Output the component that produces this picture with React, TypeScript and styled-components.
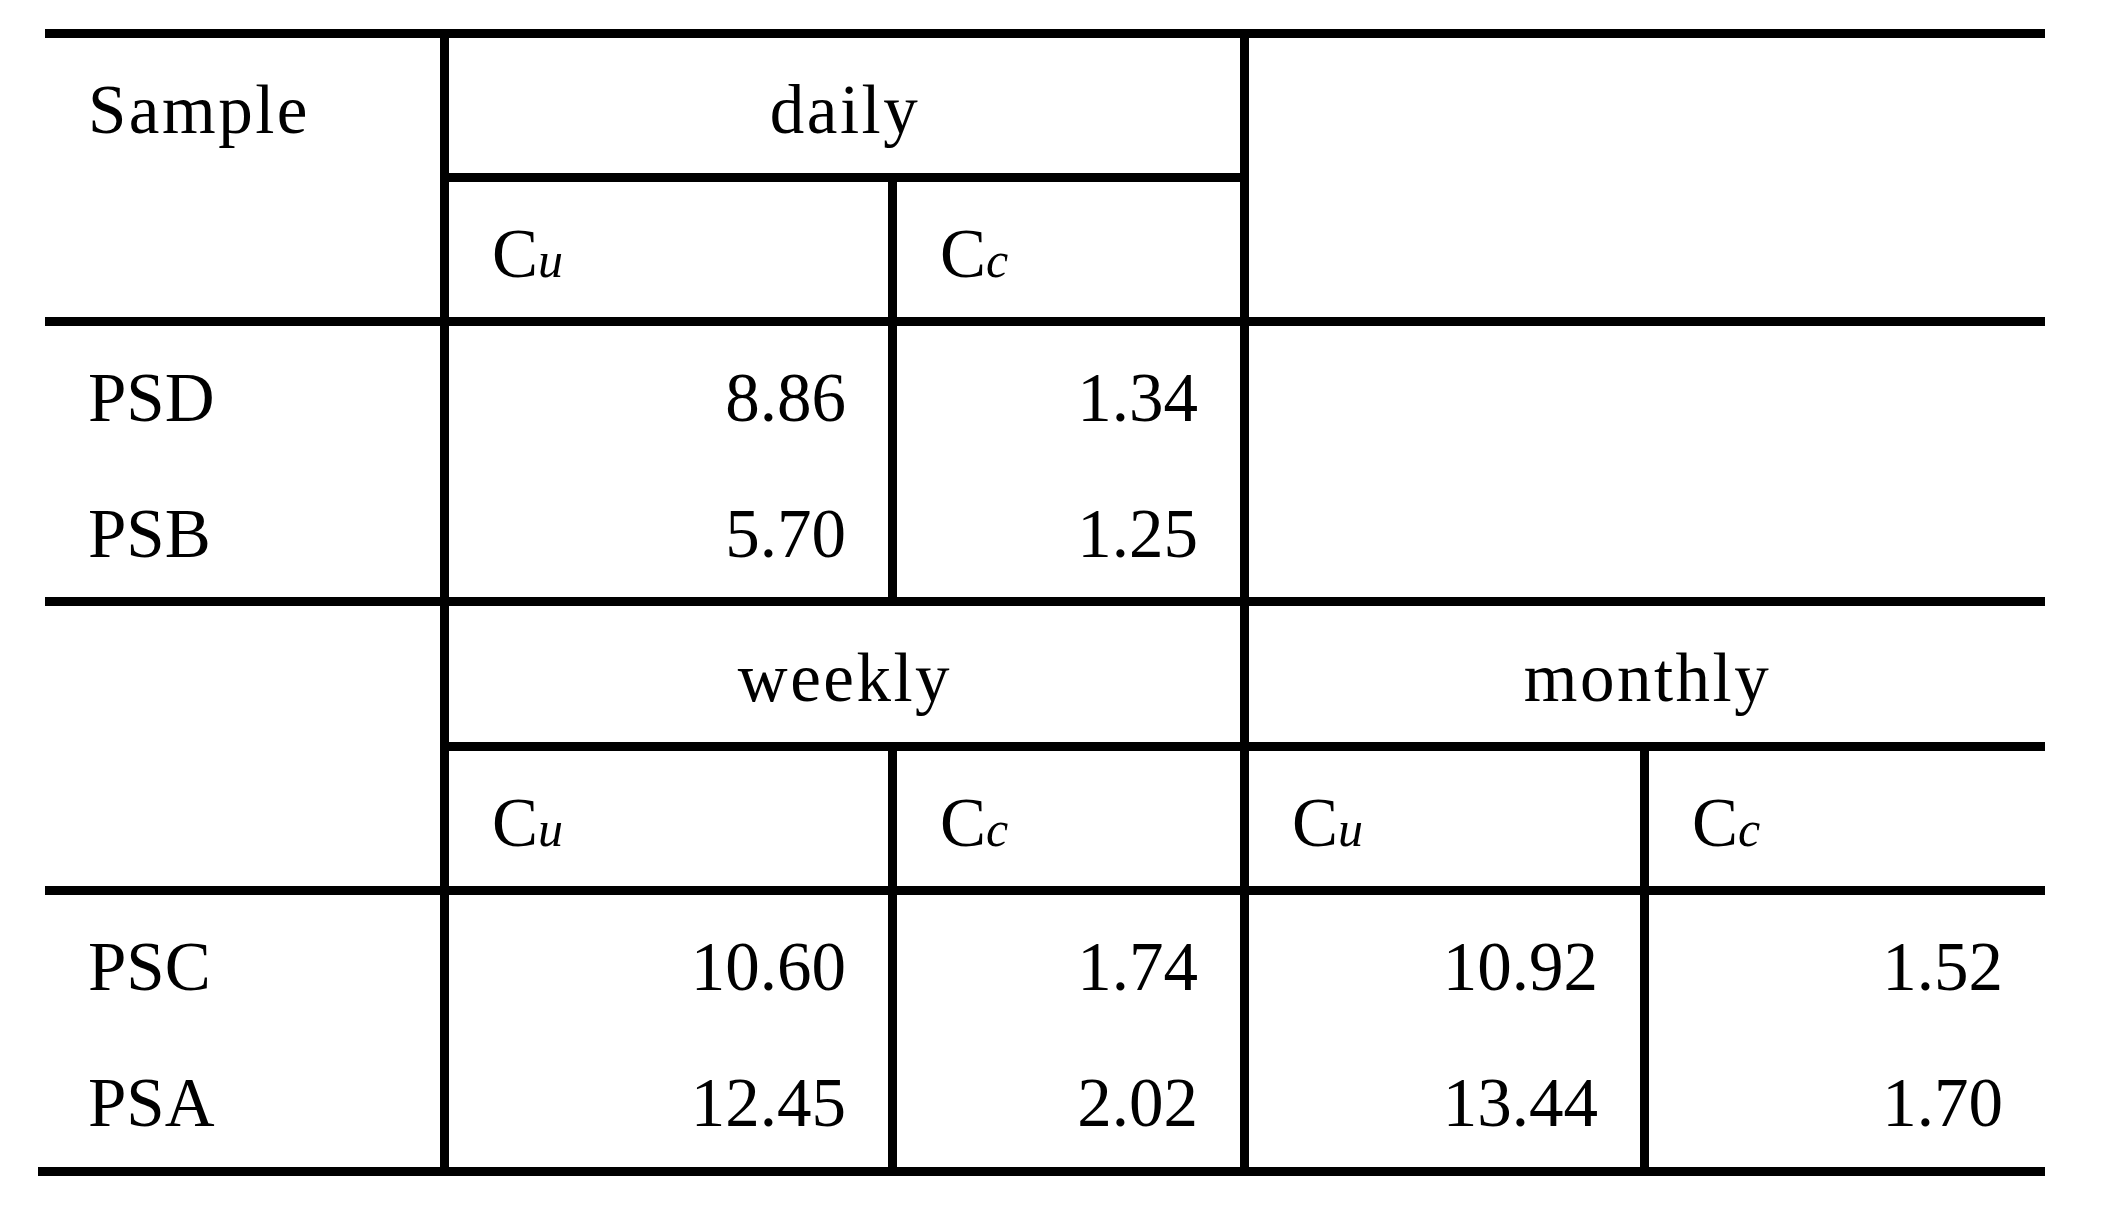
import React from "react";
import styled, { createGlobalStyle } from "styled-components";

const GlobalStyle = createGlobalStyle`
  html, body {
    margin: 0;
    padding: 0;
    background: #ffffff;
  }
  body {
    font-family: "Liberation Serif", "Times New Roman", serif;
    color: #000000;
  }
`;

const Page = styled.div`
  padding: 29px 0 0 0;
  width: 2124px;
  display: flex;
  flex-direction: column;
`;

const TableWrap = styled.div`
  padding-left: 45px;
`;

const Table = styled.table`
  width: 2000px;
  table-layout: fixed;
  border-collapse: separate;
  border-spacing: 0;
  border-top: 9px solid #000;
  font-size: 69px;
  line-height: 1;
`;

const Row = styled.tr<{ $h: number }>`
  height: ${(p) => p.$h}px;
`;

const Cell = styled.td<{
  $right?: boolean;
  $bottom?: boolean;
  $align?: "left" | "right" | "center";
}>`
  box-sizing: border-box;
  vertical-align: top;
  padding: 38px 42px 0 43px;
  text-align: ${(p) => p.$align ?? "left"};
  border-right: ${(p) => (p.$right ? "9px solid #000" : "0")};
  border-bottom: ${(p) => (p.$bottom ? "9px solid #000" : "0")};
  white-space: nowrap;
`;

const Word = styled.span`
  letter-spacing: 2.5px;
`;

const Sub = styled.span`
  font-style: italic;
  font-size: 50px;
`;

const BottomRule = styled.div`
  margin-left: 38px;
  width: 2007px;
  height: 9px;
  background: #000;
`;

const Coef: React.FC<{ s: string }> = ({ s }) => (
  <>
    C<Sub>{s}</Sub>
  </>
);

export default function App() {
  return (
    <>
      <GlobalStyle />
      <Page>
        <TableWrap>
          <Table>
            <colgroup>
              <col style={{ width: 404 }} />
              <col style={{ width: 448 }} />
              <col style={{ width: 352 }} />
              <col style={{ width: 400 }} />
              <col style={{ width: 396 }} />
            </colgroup>
            <tbody>
              <Row $h={144}>
                <Cell rowSpan={2} $right $bottom>
                  <Word>Sample</Word>
                </Cell>
                <Cell colSpan={2} $right $bottom $align="center">
                  <Word>daily</Word>
                </Cell>
                <Cell colSpan={2} rowSpan={2} $bottom />
              </Row>
              <Row $h={144}>
                <Cell $right $bottom>
                  <Coef s="u" />
                </Cell>
                <Cell $right $bottom>
                  <Coef s="c" />
                </Cell>
              </Row>
              <Row $h={136}>
                <Cell $right>PSD</Cell>
                <Cell $right $align="right">
                  8.86
                </Cell>
                <Cell $right $align="right">
                  1.34
                </Cell>
                <Cell colSpan={2} rowSpan={2} $bottom />
              </Row>
              <Row $h={144}>
                <Cell $right $bottom>
                  PSB
                </Cell>
                <Cell $right $bottom $align="right">
                  5.70
                </Cell>
                <Cell $right $bottom $align="right">
                  1.25
                </Cell>
              </Row>
              <Row $h={145}>
                <Cell rowSpan={2} $right $bottom />
                <Cell colSpan={2} $right $bottom $align="center">
                  <Word>weekly</Word>
                </Cell>
                <Cell colSpan={2} $bottom $align="center">
                  <Word>monthly</Word>
                </Cell>
              </Row>
              <Row $h={144}>
                <Cell $right $bottom>
                  <Coef s="u" />
                </Cell>
                <Cell $right $bottom>
                  <Coef s="c" />
                </Cell>
                <Cell $right $bottom>
                  <Coef s="u" />
                </Cell>
                <Cell $bottom>
                  <Coef s="c" />
                </Cell>
              </Row>
              <Row $h={136}>
                <Cell $right>PSC</Cell>
                <Cell $right $align="right">
                  10.60
                </Cell>
                <Cell $right $align="right">
                  1.74
                </Cell>
                <Cell $right $align="right">
                  10.92
                </Cell>
                <Cell $align="right">1.52</Cell>
              </Row>
              <Row $h={136}>
                <Cell $right>PSA</Cell>
                <Cell $right $align="right">
                  12.45
                </Cell>
                <Cell $right $align="right">
                  2.02
                </Cell>
                <Cell $right $align="right">
                  13.44
                </Cell>
                <Cell $align="right">1.70</Cell>
              </Row>
            </tbody>
          </Table>
        </TableWrap>
        <BottomRule />
      </Page>
    </>
  );
}
